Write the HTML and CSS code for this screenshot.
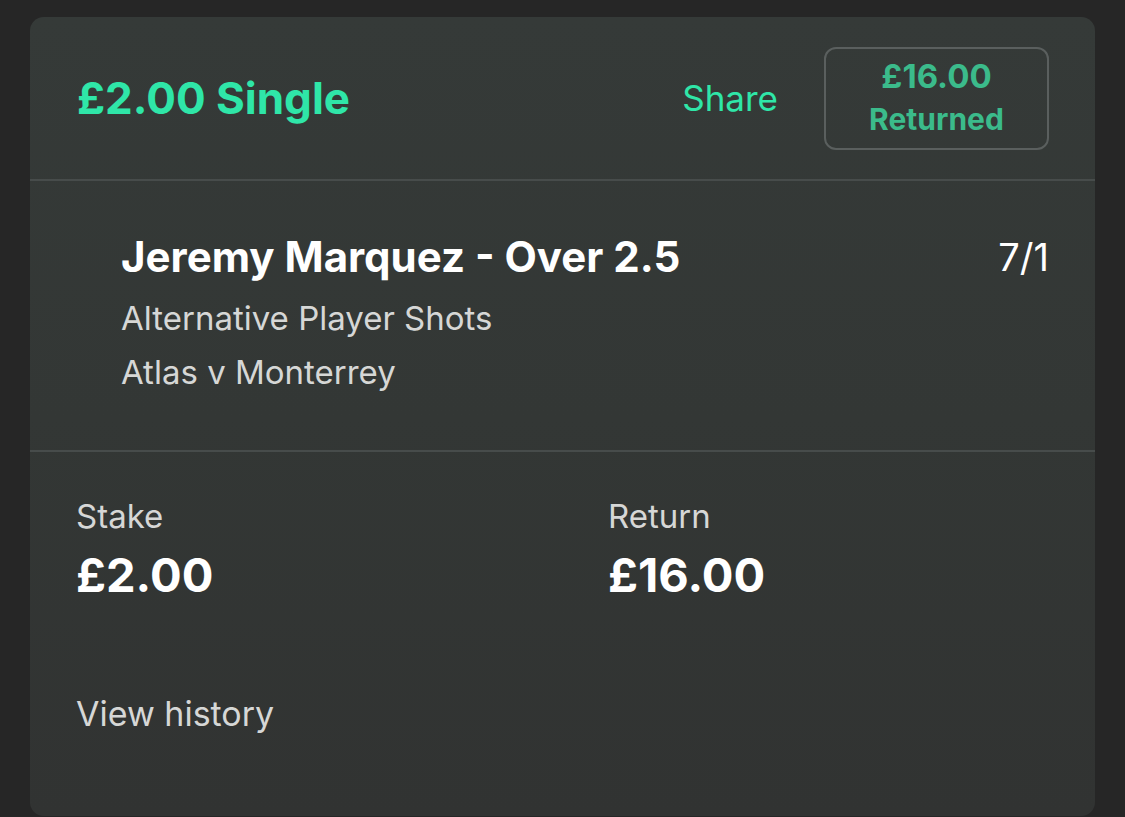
FILE: index.html
```html
<!DOCTYPE html>
<html>
<head>
<meta charset="utf-8">
<link rel="stylesheet" href="styles.css">
</head>
<body>
<div class="card">
  <div class="header">
    <div class="title">£2.00 Single</div>
    <div class="actions">
      <div class="share">Share</div>
      <div class="returned">
        <div class="ret-amount">£16.00</div>
        <div class="ret-label">Returned</div>
      </div>
    </div>
  </div>
  <div class="selection">
    <div class="sel-main">
      <div class="sel-name">Jeremy Marquez - Over 2.5</div>
      <div class="sel-sub">Alternative Player Shots</div>
      <div class="sel-sub">Atlas v Monterrey</div>
    </div>
    <div class="odds">7/1</div>
  </div>
  <div class="summary">
    <div class="figures">
      <div class="fig fig-first">
        <div class="fig-label">Stake</div>
        <div class="fig-value">£2.00</div>
      </div>
      <div class="fig">
        <div class="fig-label">Return</div>
        <div class="fig-value">£16.00</div>
      </div>
    </div>
    <div class="history">View history</div>
  </div>
</div>
</body>
</html>
```
FILE: styles.css
```css
html, body {
  margin: 0;
  padding: 0;
  background: #262626;
  height: 817px;
  overflow: hidden;
}
body {
  font-family: Inter, "Noto Sans", sans-serif;
  padding: 17px 30px 0 30px;
}
.card {
  width: 1065px;
  height: 799px;
  border-radius: 14px;
  background: linear-gradient(180deg, #353a38 0%, #333735 50%, #313332 100%);
  display: flex;
  flex-direction: column;
}
.header {
  height: 162px;
  display: flex;
  align-items: center;
  justify-content: space-between;
  padding: 0 46px 0 47px;
  border-bottom: 2px solid #474c4b;
}
.title {
  color: #2fe6a8;
  font-weight: 700;
  font-size: 44px;
}
.actions {
  display: flex;
  align-items: center;
  gap: 46px;
}
.share {
  color: #2fe6a8;
  font-size: 35px;
  font-weight: 400;
}
.returned {
  width: 221px;
  height: 99px;
  border: 2px solid #5a5f5e;
  border-radius: 12px;
  display: flex;
  flex-direction: column;
  align-items: center;
  justify-content: center;
  color: #3bbb8b;
  font-weight: 700;
  line-height: 43px;
}
.ret-amount {
  font-size: 33px;
}
.ret-label {
  font-size: 30px;
}
.selection {
  height: 271px;
  display: flex;
  justify-content: space-between;
  align-items: flex-start;
  padding: 0 46px 0 91px;
  border-bottom: 2px solid #474c4b;
  box-sizing: border-box;
}
.sel-main {
  padding-top: 53px;
}
.sel-name {
  color: #ffffff;
  font-weight: 700;
  font-size: 42px;
  line-height: 46px;
  margin-bottom: 11px;
}
.sel-sub {
  color: #d6d7d6;
  font-size: 33px;
  line-height: 54px;
}
.odds {
  padding-top: 53px;
  color: #ffffff;
  font-size: 38px;
  line-height: 46px;
}
.summary {
  padding: 49px 46px 0 46px;
  display: flex;
  flex-direction: column;
}
.figures {
  display: flex;
}
.fig-first {
  width: 532px;
  flex-shrink: 0;
}
.fig-label {
  color: #d6d7d6;
  font-size: 33px;
  line-height: 30px;
}
.fig-value {
  color: #ffffff;
  font-weight: 700;
  font-size: 47px;
  line-height: 56px;
  margin-top: 16px;
}
.history {
  margin-top: 93px;
  color: #d6d7d6;
  font-size: 34px;
  line-height: 36px;
}
```
